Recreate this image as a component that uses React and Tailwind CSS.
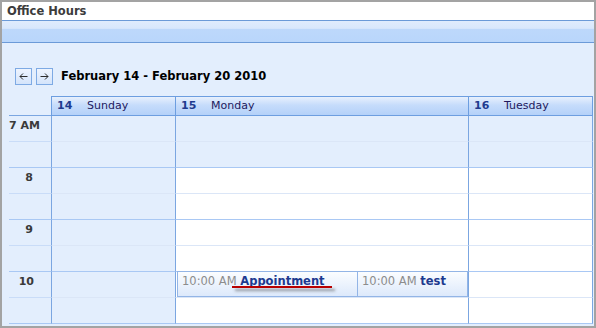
const font = { fontFamily: '"DejaVu Sans", Verdana, sans-serif' }

const days = [
  { num: '14', name: 'Sunday', weekend: true },
  { num: '15', name: 'Monday' },
  { num: '16', name: 'Tuesday', last: true },
]

const slots = [
  { label: '7 AM', hour: true, off: true, pad: 'pr-[11px]' },
  { off: true },
  { label: '8', hour: true, pad: 'pr-[18px]' },
  {},
  { label: '9', hour: true, pad: 'pr-[18px]' },
  {},
  { label: '10', hour: true, pad: 'pr-[17px]', appts: true },
  {},
]

const ArrowBtn = ({ dir }) => (
  <button className="w-[17px] h-[17px] flex items-center justify-center border border-[#7eaae4] bg-[linear-gradient(to_bottom,#eef4fe,#d4e4fb)]">
    <svg width="9" height="7" viewBox="0 0 9 7" fill="none" stroke="#2b2b2b" strokeWidth="1">
      {dir === 'left' ? (
        <path d="M8.5 3.5H1M4 0.5L1 3.5L4 6.5" />
      ) : (
        <path d="M0.5 3.5H8M5 0.5L8 3.5L5 6.5" />
      )}
    </svg>
  </button>
)

const Appointment = ({ title, className }) => (
  <div className={`h-full pl-[4px] pt-[2px] border-[#93b5e6] bg-[linear-gradient(to_bottom,#fbfdff,#dde9fb)] text-[11.5px] leading-[14px] whitespace-nowrap ${className}`}>
    <span className="text-[#8c8c8c]">10:00 AM </span>
    <span className="font-bold text-[#1d3a8f]">{title}</span>
  </div>
)

export default function App() {
  return (
    <div className="w-[596px] h-[328px] border-2 border-[#a3a3a3] bg-white flex flex-col overflow-hidden" style={font}>
      {/* Title */}
      <div className="h-[18px] pl-[5px] text-[11.5px] leading-[18px] font-bold text-[#3c3c3c]">Office Hours</div>

      {/* Toolbar band */}
      <div className="h-[23px] border-y border-[#6b9ad8] bg-[linear-gradient(to_bottom,#e0ecfd_0,#d8e7fc_35%,#bdd8fb_40%,#b9d6fb_100%)]" />

      {/* Main */}
      <div className="flex-1 bg-[#e3eefd] pt-[25px]">
        <div className="flex items-center pl-[13px] gap-[4px] h-[17px]">
          <ArrowBtn dir="left" />
          <ArrowBtn dir="right" />
          <span className="ml-[4px] text-[11.5px] font-bold text-black">February 14 - February 20 2010</span>
        </div>

        <div className="mt-[11px] grid grid-cols-[49px_124px_293px_125px]">
          {/* Header row */}
          <div className="h-[20px] ml-[7px] border-b border-[#7ba6e1]" />
          {days.map((d) => (
            <div
              key={d.num}
              className={`h-[20px] flex items-center pl-[5px] border-y border-l border-[#6d9ee0] bg-[linear-gradient(to_bottom,#e8f0fd,#c6dcfb_45%,#b4d1f9)] text-[11px] ${d.last ? 'border-r border-r-[#6d9ee0]' : ''}`}
            >
              <span className="inline-block w-[30px] font-bold text-[#1f3b8f]">{d.num}</span>
              <span className="text-[#22195e]">{d.name}</span>
            </div>
          ))}

          {/* Slots */}
          {slots.map((s, i) => {
            const line = s.hour ? 'border-b-[#dbe6f7]' : 'border-b-[#a9c8f4]'
            return [
              <div key={`t${i}`} className={`h-[26px] ml-[7px] border-b ${s.hour ? 'border-b-[#c9dcf8]' : 'border-b-[#a9c8f4]'} text-right pt-[3px] ${s.pad || ''} text-[11px] leading-[13px] font-bold text-[#3a3a3a] whitespace-nowrap`}>
                {s.label}
              </div>,
              ...days.map((d) => (
                <div
                  key={`${d.num}-${i}`}
                  className={`h-[26px] border-l border-l-[#7ba6e1] border-b ${line} ${d.weekend || s.off ? 'bg-[#e3eefd]' : 'bg-white'} ${d.last ? 'border-r border-r-[#7ba6e1]' : ''}`}
                >
                  {s.appts && d.num === '15' && (
                    <div className="flex h-[26px] -mt-px pl-[1px]">
                      <div className="relative w-[180px] h-full">
                        <Appointment title="Appointment" className="border-y border-l" />
                        <div className="absolute left-[55px] top-[15px] w-[100px] h-[2px] bg-[#b80000] shadow-[3px_3px_3px_rgba(60,60,60,0.55)]" />
                      </div>
                      <div className="flex-1 h-full">
                        <Appointment title="test" className="border" />
                      </div>
                    </div>
                  )}
                </div>
              )),
            ]
          })}
        </div>
      </div>
    </div>
  )
}
